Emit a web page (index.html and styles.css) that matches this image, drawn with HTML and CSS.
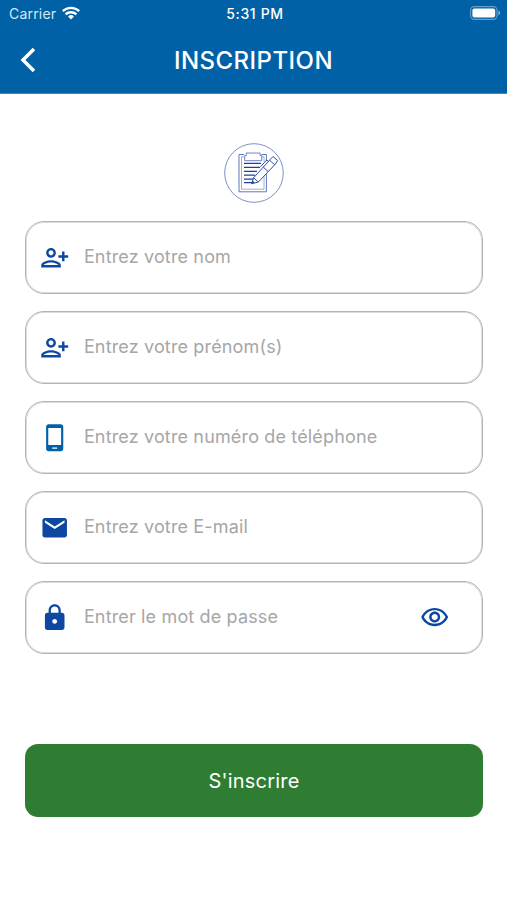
FILE: index.html
```html
<!DOCTYPE html>
<html lang="fr">
<head>
    <meta charset="UTF-8">
    <meta name="viewport" content="width=device-width, initial-scale=1.0">
    <title>Inscription</title>
    <link rel="stylesheet" href="styles.css">
</head>
<body>

    <header class="header">
        <div class="status-bar">
            <div class="network">
                <span class="carrier">Carrier</span>
                <svg class="wifi" viewBox="0 0 18 14">
                    <path d="M0.8 5.2a11.8 11.8 0 0 1 16.4 0M3.6 8.4a7.8 7.8 0 0 1 10.8 0" fill="none" stroke="#fff" stroke-width="2.3"/>
                    <path d="M9 13.6l-3-3.1a4.4 4.4 0 0 1 6 0z" fill="#fff"/>
                </svg>
            </div>
            <span class="time">5:31 PM</span>
            <svg class="battery" viewBox="0 0 31 14">
                <rect x="0.6" y="0.6" width="26.4" height="12.8" rx="3.6" fill="none" stroke="#fff" stroke-opacity="0.4" stroke-width="1.1"/>
                <rect x="2.4" y="2.4" width="22.8" height="9.2" rx="2" fill="#fff"/>
                <path d="M28.4 4.6c2.4 1 2.4 3.8 0 4.8z" fill="#fff" fill-opacity="0.5"/>
            </svg>
        </div>
        <div class="nav-bar">
            <button class="back" type="button" aria-label="Retour">
                <svg viewBox="0 0 16 26"><path d="M14 2L3 13l11 11" fill="none" stroke="#fff" stroke-width="3.5"/></svg>
            </button>
            <h1>INSCRIPTION</h1>
        </div>
    </header>

    <main class="container">
        <svg class="logo" viewBox="0 0 60 60" fill="none" stroke="#5d78be">
            <circle cx="30" cy="30" r="29.3" stroke-width="0.9" stroke="#6a83c4"/>
            <path d="M20 11.5h-5v37.3h27.4V30M37.5 11.5h4.9v6" stroke-width="1"/>
            <path d="M20 13.8h-2.5v32.4H40V32M37.5 13.8H40v5" stroke-width="0.6"/>
            <path d="M20.7 17.7v-5.2h1.6V10h13.8v2.500h1.600v5.200z" stroke-width="0.9" fill="#fff"/>
            <path d="M20 20.3h17M20 24.3h16M20 28.3h13M20 32.2h11M20 36.1h9M20 39.6h8" stroke-width="1.2" stroke="#1c439c"/>
            <path d="M27.6 40.800l2-6L46.200 16.500l2.800-3 4.600 4-2.400 3.800L34.400 39z" stroke-width="1" fill="#fff" stroke="#2c50a5"/>
            <path d="M29.600 34.800l4.800 4.200M39.400 24.200l4.600 4.200M45.600 17.200l5.200 4.600M44.500 18.400l-1.800-1.400-6.200 6.800" stroke-width="1" stroke="#2c50a5"/>
            <path d="M27.600 40.800l1.100-3 1.900 1.800z" fill="#1c439c" stroke="none"/>
        </svg>

        <form class="form">
            <label class="field">
                <svg class="icon" viewBox="0 0 24 24"><path d="M13 8c0-2.21-1.79-4-4-4S5 5.79 5 8s1.79 4 4 4 4-1.79 4-4zm-2 0c0 1.1-.9 2-2 2s-2-.9-2-2 .9-2 2-2 2 .9 2 2zM1 18v2h16v-2c0-2.66-5.33-4-8-4s-8 1.34-8 4zm2 0c.2-.71 3.3-2 6-2 2.69 0 5.77 1.28 6 2H3zm17-3v-3h3v-2h-3V7h-2v3h-3v2h3v3h2z"/></svg>
                <input type="text" placeholder="Entrez votre nom">
            </label>
            <label class="field">
                <svg class="icon" viewBox="0 0 24 24"><path d="M13 8c0-2.21-1.79-4-4-4S5 5.79 5 8s1.79 4 4 4 4-1.79 4-4zm-2 0c0 1.1-.9 2-2 2s-2-.9-2-2 .9-2 2-2 2 .9 2 2zM1 18v2h16v-2c0-2.66-5.33-4-8-4s-8 1.34-8 4zm2 0c.2-.71 3.3-2 6-2 2.69 0 5.77 1.28 6 2H3zm17-3v-3h3v-2h-3V7h-2v3h-3v2h3v3h2z"/></svg>
                <input type="text" placeholder="Entrez votre prénom(s)">
            </label>
            <label class="field">
                <svg class="icon icon-phone" viewBox="0 0 24 24"><path d="M17 1H7c-1.1 0-2 .9-2 2v18c0 1.1.9 2 2 2h10c1.1 0 2-.9 2-2V3c0-1.1-.9-2-2-2zm-3 20h-4v-1h4v1zm3.250-3H6.750V4h10.500v14z"/></svg>
                <input type="tel" placeholder="Entrez votre numéro de téléphone">
            </label>
            <label class="field">
                <svg class="icon" viewBox="0 0 24 24"><path d="M20 4H4c-1.1 0-1.99.9-1.99 2L2 18c0 1.1.9 2 2 2h16c1.1 0 2-.9 2-2V6c0-1.1-.9-2-2-2zm0 4l-8 5-8-5V6l8 5 8-5v2z"/></svg>
                <input type="email" placeholder="Entrez votre E-mail">
            </label>
            <label class="field">
                <svg class="icon" viewBox="0 0 24 24"><path d="M18 8h-1V6c0-2.76-2.24-5-5-5S7 3.24 7 6v2H6c-1.1 0-2 .9-2 2v10c0 1.1.9 2 2 2h12c1.1 0 2-.9 2-2V10c0-1.1-.9-2-2-2zm-6 9c-1.1 0-2-.9-2-2s.9-2 2-2 2 .9 2 2-.9 2-2 2zm3.1-9H8.900V6c0-1.71 1.39-3.1 3.1-3.1 1.71 0 3.1 1.39 3.1 3.1v2z"/></svg>
                <input type="password" placeholder="Entrer le mot de passe">
                <svg class="icon icon-eye" viewBox="0 0 24 24"><path d="M12 6c3.79 0 7.17 2.13 8.82 5.5C19.17 14.87 15.79 17 12 17s-7.17-2.13-8.82-5.5C4.83 8.13 8.21 6 12 6m0-2C7 4 2.73 7.11 1 11.5 2.73 15.89 7 19 12 19s9.27-3.11 11-7.5C21.27 7.11 17 4 12 4zm0 5c1.38 0 2.5 1.12 2.5 2.5S13.38 14 12 14s-2.5-1.12-2.5-2.5S10.62 9 12 9m0-2c-2.48 0-4.5 2.02-4.5 4.5S9.52 16 12 16s4.5-2.02 4.5-4.5S14.48 7 12 7z"/></svg>
            </label>

            <button class="submit" type="button">S'inscrire</button>
        </form>
    </main>

</body>
</html>
```

FILE: styles.css
```css
* {
    margin: 0;
    padding: 0;
    box-sizing: border-box;
    font-family: Inter, 'Liberation Sans', sans-serif;
}

body {
    background: #fff;
    min-height: 900px;
}

/* ====== Header ====== */
.header {
    height: 94px;
    background: #0061a6;
    color: #fff;
    border-bottom: 1px solid #3f88bd;
}

.status-bar {
    display: grid;
    grid-template-columns: 1fr auto 1fr;
    align-items: center;
    height: 27px;
    padding: 0 6px 0 9px;
}

.network {
    display: flex;
    align-items: center;
    gap: 6px;
}

.carrier {
    font-size: 14px;
    letter-spacing: 0.2px;
    color: #d5e8f5;
}

.wifi {
    width: 18px;
    height: 14px;
    margin-top: -2px;
}

.time {
    font-size: 14px;
    font-weight: 500;
    letter-spacing: 0.65px;
}

.battery {
    width: 31px;
    height: 14px;
    margin-top: -1px;
    justify-self: end;
}

.nav-bar {
    display: grid;
    grid-template-columns: 40px 1fr 40px;
    align-items: center;
    height: 66px;
}

.back {
    width: 16px;
    height: 26px;
    margin-left: 20px;
    border: none;
    background: none;
}

.back svg {
    display: block;
    width: 16px;
    height: 26px;
}

h1 {
    font-size: 24px;
    font-weight: 500;
    letter-spacing: 0.45px;
    text-align: center;
}

/* ====== Form ====== */
.container {
    padding: 49px 24px 0 25px;
}

.logo {
    display: block;
    width: 60px;
    height: 60px;
    margin: 0 auto 18px;
}

.form {
    display: flex;
    flex-direction: column;
    gap: 17px;
}

.field {
    display: flex;
    align-items: center;
    height: 73px;
    padding: 0 33px 0 14px;
    border: 1px solid #b4b4b4;
    border-radius: 19px;
    box-shadow: inset 0 0 0 1px #dcdcdc;
}

.icon {
    flex: none;
    width: 29.4px;
    height: 29.4px;
    fill: #0d47a1;
}

.icon-phone {
    fill: #0061a6;
}

.field input {
    flex: 1;
    min-width: 0;
    height: 40px;
    margin-left: 14.5px;
    padding-bottom: 2px;
    border: none;
    outline: none;
    background: none;
    font-size: 18px;
    letter-spacing: 0.15px;
}

.field input::placeholder {
    color: #a6a6a6;
}

.submit {
    height: 73px;
    margin-top: 73px;
    border: none;
    border-radius: 13px;
    background: #2e7d32;
    color: #fff;
    font-size: 20px;
    letter-spacing: 0.2px;
}
```
